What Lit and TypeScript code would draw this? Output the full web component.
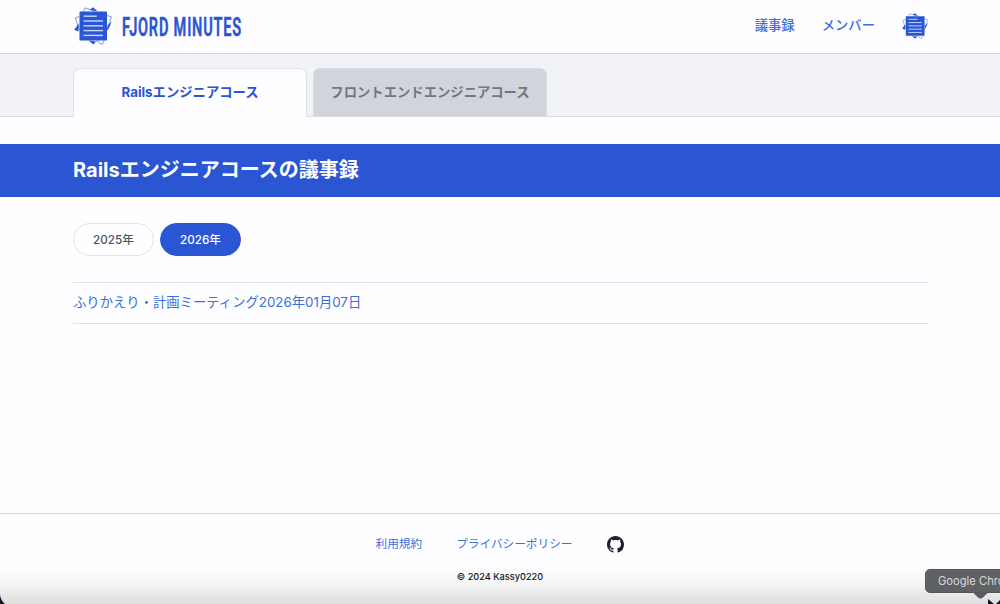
import { LitElement, html, svg, css } from "lit";
import { customElement, property, state } from "lit/decorators.js";

@customElement("paper-logo")
class PaperLogo extends LitElement {
  static styles = css`
    :host { display: block; }
    svg { display: block; width: 100%; height: 100%; overflow: visible; }
  `;
  render() {
    return html`<svg viewBox="0 0 38 38">
      <path d="M9.500 5 11 .9 22 4.200M5.500 9.500 1.300 11 5.500 23M33 8.500l4.300 1.300L33 23.500M22 33.500l6.300 4L30 33.500" fill="none" stroke="#5b7ddd" stroke-width=".8" />
      <g fill="#2a55d3">
        <path d="M15.500 3 19 .3 23.500 4.200z M33.500 18.500l4.300-4L34.500 22l-1.500 1z M4.800 16.500 .2 22.700 4.500 24.500z M14.500 33.500l5 4L22 34.500z" />
        <rect x="5.500" y="4.600" width="27.500" height="28.800" rx=".4" />
      </g>
      <g stroke="#c8d8fb" stroke-width="1.4">
        ${[0, 1, 2, 3, 4].map((i) => svg`<path d=${`M9.5 ${9.2 + i * 4.8}H${i ? 29 : 22.8}`} />`)}
      </g>
    </svg>`;
  }
}

@customElement("course-tab")
class CourseTab extends LitElement {
  @property({ type: Boolean, reflect: true }) active = false;
  static styles = css`
    :host {
      box-sizing: border-box; width: 234px; height: 48px; padding-bottom: 3px;
      display: flex; align-items: center; justify-content: center;
      border: 1px solid #d9dce1; border-bottom: 0; border-radius: 7px 7px 0 0;
      background: #d1d5db; color: #707784; font-size: 13.33px; font-weight: 700;
    }
    :host([active]) { background: #fefdff; color: #2a55d3; height: 49px; padding-bottom: 4px; margin-bottom: -1px; border-color: #e0e3e7; }
  `;
  render() { return html`<slot></slot>`; }
}

@customElement("app-root")
class AppRoot extends LitElement {
  @state() private year = 2026;

  static styles = css`
    :host {
      display: flex; flex-direction: column; position: relative; overflow: hidden;
      height: 604px; background: #fefdff; color: #111827;
      font-family: Inter, "Noto Sans CJK JP", sans-serif; font-size: 13.33px;
    }
    * { box-sizing: border-box; }
    a { color: #3b70dc; text-decoration: none; }
    .header { height: 54px; padding: 0 72px 2px 74px; border-bottom: 1px solid #bfdbfe; display: flex; align-items: center; justify-content: space-between; flex: none; }
    .brand { display: flex; align-items: center; gap: 9px; }
    .mark { width: 38px; height: 38px; }
    .word { width: 124px; height: 32px; display: block; }
    .word text { font: 600 25.2px Roboto, sans-serif; letter-spacing: 1.4px; fill: #2a55d3; stroke: #2a55d3; stroke-width: .5px; }
    .nav { display: flex; align-items: center; gap: 27px; }
    .nav a { font-weight: 500; padding-bottom: 2px; }
    .avatar { width: 26px; height: 26px; }
    .tabs { height: 63px; flex: none; padding: 0 73px; background: #f1f3f6; border-bottom: 1px solid #dadde1; display: flex; align-items: flex-end; gap: 6px; }
    .banner { height: 53px; margin: 27px 0 0; padding: 0 73px 4px; flex: none; background: #2a55d3; color: #fff; display: flex; align-items: center; font-size: 20px; font-weight: 700; }
    .main { flex: 1; padding: 26px 72px 0 73px; }
    .years { display: flex; gap: 6px; }
    .year { width: 81px; height: 33px; border: 1px solid #e2e4e7; border-radius: 17px; background: #fefdff; color: #4b5563; font: 500 11.67px Inter, "Noto Sans CJK JP", sans-serif; padding: 0 0 2px; }
    .year.on { background: #2a55d3; border-color: #2a55d3; color: #fff; }
    .list { list-style: none; margin: 26px 0 0; padding: 0; border-top: 1px solid #dfe1e5; }
    .list li { height: 41px; padding-bottom: 3px; display: flex; align-items: center; border-bottom: 1px solid #dfe1e5; }
    .footer { height: 91px; flex: none; border-top: 1px solid #bfdbfe; padding-top: 21px; display: flex; flex-direction: column; align-items: center; gap: 14px; background: linear-gradient(#fefdff 58%, #f4f4f5 78%, #dededf); }
    .links { display: flex; align-items: center; font-size: 11.67px; height: 18px; gap: 34px; }
    .links a { padding-bottom: 3px; }
    .github { width: 17px; height: 17px; display: block; margin-left: 1px; }
    .copy { font-size: 9.2px; line-height: 20px; font-weight: 500; }
    .dock-tip { position: absolute; left: 925px; top: 569px; width: 90px; height: 24px; padding-left: 12px; border: 1px solid #55565a; border-radius: 5px; background: #606164; color: #d8d8da; font-size: 11.2px; line-height: 22px; white-space: nowrap; }
    .overlay { position: absolute; left: 0; top: 590px; width: 1000px; height: 14px; display: block; }
  `;

  render() {
    return html`
      <header class="header">
        <div class="brand">
          <paper-logo class="mark"></paper-logo>
          <svg class="word" viewBox="0 0 124 32"><text x="1" y="25.5" textLength="120" lengthAdjust="spacingAndGlyphs">FJORD MINUTES</text></svg>
        </div>
        <nav class="nav">
          <a href="#">議事録</a><a href="#">メンバー</a>
          <paper-logo class="avatar"></paper-logo>
        </nav>
      </header>
      <div class="tabs">
        <course-tab active>Railsエンジニアコース</course-tab>
        <course-tab>フロントエンドエンジニアコース</course-tab>
      </div>
      <h1 class="banner">Railsエンジニアコースの議事録</h1>
      <main class="main">
        <div class="years">
          ${[2025, 2026].map((y) => html`<button class="year ${y === this.year ? "on" : ""}" @click=${() => (this.year = y)}>${y}年</button>`)}
        </div>
        <ul class="list"><li><a href="#">ふりかえり・計画ミーティング2026年01月07日</a></li></ul>
      </main>
      <footer class="footer">
        <div class="links">
          <a href="#">利用規約</a><a href="#">プライバシーポリシー</a>
          <svg class="github" viewBox="0 0 16 16" fill="#1b2230"><path d="M8 0C3.58 0 0 3.58 0 8c0 3.54 2.29 6.53 5.47 7.59.4.07.55-.17.55-.38 0-.19-.01-.82-.01-1.49-2.01.37-2.53-.49-2.69-.94-.09-.23-.48-.94-.82-1.13-.28-.15-.68-.52-.01-.53.63-.01 1.08.58 1.23.82.72 1.21 1.87.87 2.33.66.07-.52.28-.87.51-1.07-1.78-.2-3.64-.89-3.64-3.95 0-.87.31-1.59.82-2.15-.08-.2-.36-1.02.08-2.12 0 0 .67-.21 2.2.82.64-.18 1.32-.27 2-.27s1.36.09 2 .27c1.53-1.04 2.2-.82 2.2-.82.44 1.1.16 1.92.08 2.12.51.56.82 1.27.82 2.15 0 3.07-1.87 3.75-3.65 3.95.29.25.54.73.54 1.48 0 1.07-.01 1.93-.01 2.2 0 .21.15.46.55.38A8.01 8.01 0 0 0 16 8c0-4.42-3.58-8-8-8z" /></svg>
        </div>
        <div class="copy">© 2024 Kassy0220</div>
      </footer>
      <div class="dock-tip">Google Chrome</div>
      <svg class="overlay" viewBox="0 0 1000 14">
        <path d="M973 2.5h15l-5 5q-2.500 2-5 0z" fill="#5b5c5f" />
        <path d="M0 5q1 6 5 9H0z M988 9l6 5h-6z M996 14l4-4v4z" fill="#111722" />
      </svg>
    `;
  }
}
